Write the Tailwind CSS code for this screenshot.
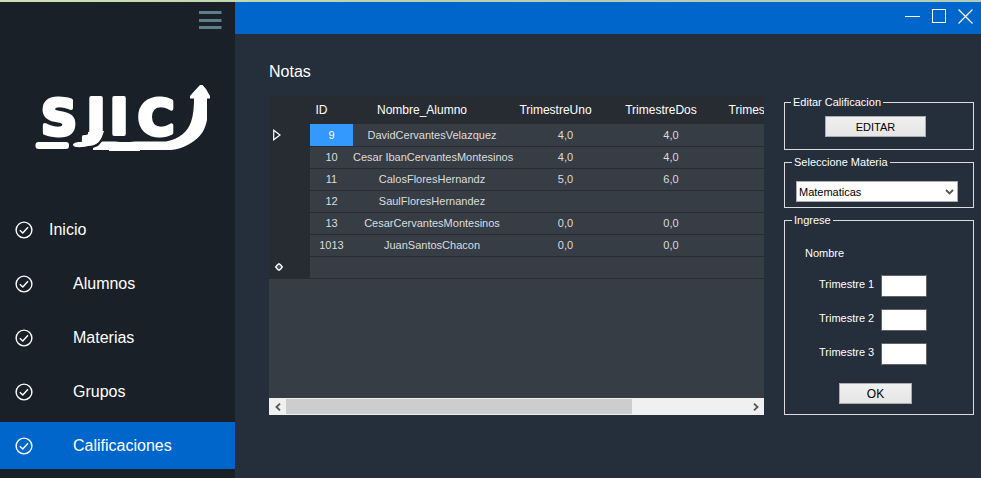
<!DOCTYPE html>
<html lang="es">
<head>
<meta charset="utf-8">
<title>Notas</title>
<script src="https://cdn.jsdelivr.net/npm/@tailwindcss/browser@4"></script>
</head>
<body class="flex min-h-screen flex-col bg-[#252e3b] font-['Liberation_Sans',sans-serif] text-white">
<svg class="hidden">
  <symbol id="check" viewBox="0 0 18 18"><circle cx="9" cy="9" r="7.9" fill="none" stroke="#fff" stroke-width="1.4"/><path d="M4.8 9.2 7.8 12 13 6.2" fill="none" stroke="#fff" stroke-width="1.4"/></symbol>
</svg>
<div class="h-0.5 bg-linear-to-r from-[#cfe0b4] via-[#b5cfb0] to-[#a9cfb8]"></div>
<div class="flex flex-1">
  <aside class="flex w-[235px] shrink-0 flex-col bg-[#1a2028]">
    <div class="flex justify-end pt-2 pr-[13px]">
      <button aria-label="Menú" class="block">
        <svg width="23" height="20" viewBox="0 0 23 20" fill="#607d8b"><path d="M0 1h22.5v3H0zM0 9h22.5v3H0zM0 16h22.5v3H0z"/></svg>
      </button>
    </div>
    <svg class="mt-[50px] ml-[30px]" width="186" height="76" viewBox="30 80 186 76" fill="#fff" stroke="#fff" stroke-linejoin="round" font-family="DejaVu Sans" font-weight="700" font-size="50" role="img" aria-label="SJIC">
      <g stroke-width="4" text-anchor="middle">
        <text x="59" y="135">S</text>
        <text x="96" y="134">J</text>
        <text x="119" y="134">I</text>
        <text x="156" y="135">C</text>
      </g>
      <g stroke="none">
        <rect x="35.500" y="142" width="33.500" height="7" rx="3"/>
        <path d="M102 141.500H115Q125 142.500 135 141.500H166C180 139 188 131 191 122C193.500 115 194 106 194 98.500H190V96L193.500 92L200 85H202.500L206 89L210 96V98.500H207V120C205 130 201 136 194 141C186 147 178 149.500 170 150H140V151H109V150H93V148L98 146Z"/>
        <path d="M88 132C89 138 86 141.500 80 142C76 142 73 143 73 145C74 148 82 148 92 145C98 144 102 138 104 131Z"/>
      </g>
    </svg>
    <nav class="mt-[50px] flex flex-col gap-[7px] text-base">
      <a href="#" class="flex h-[47px] items-center gap-4 pl-[15px]"><svg width="18" height="18"><use href="#check"/></svg>Inicio</a>
      <a href="#" class="flex h-[47px] items-center gap-10 pl-[15px]"><svg width="18" height="18"><use href="#check"/></svg>Alumnos</a>
      <a href="#" class="flex h-[47px] items-center gap-10 pl-[15px]"><svg width="18" height="18"><use href="#check"/></svg>Materias</a>
      <a href="#" class="flex h-[47px] items-center gap-10 pl-[15px]"><svg width="18" height="18"><use href="#check"/></svg>Grupos</a>
      <a href="#" class="flex h-[47px] items-center gap-10 bg-[#0066cc] pl-[15px]"><svg width="18" height="18"><use href="#check"/></svg>Calificaciones</a>
    </nav>
  </aside>
  <div class="flex min-w-0 flex-1 flex-col">
    <header class="flex h-8 items-center justify-end gap-3 bg-[#0066cc] pr-2 pb-1">
      <button aria-label="Minimizar"><svg width="15" height="15"><path d="M0 7.500H15" stroke="#fff"/></svg></button>
      <button aria-label="Maximizar"><svg width="14" height="14"><rect x=".5" y=".5" width="13" height="13" fill="none" stroke="#fff"/></svg></button>
      <button aria-label="Cerrar"><svg width="15" height="15"><path d="M.5.5l14 14M14.500.5l-14 14" stroke="#fff" stroke-width="1.200"/></svg></button>
    </header>
    <main class="flex-1 pt-[26px] pr-[7px] pl-[34px]">
      <h1 class="mb-3 text-base/6">Notas</h1>
      <div class="flex items-stretch gap-5">
        <section class="flex min-w-0 flex-1 flex-col bg-[#373d45]">
          <div class="flex-1 overflow-hidden">
            <table class="w-[560px] table-fixed border-collapse text-center text-[11px]/4 whitespace-nowrap text-[#dcdcdc]">
              <colgroup><col class="w-[41px]"><col class="w-[43px]"><col class="w-[158px]"><col class="w-[109px]"><col class="w-[102px]"><col class="w-[107px]"></colgroup>
              <thead>
                <tr class="h-7 bg-[#272c33] text-xs text-white">
                  <th class="p-0"></th><th class="py-0 pr-5 pl-0 font-normal">ID</th><th class="py-0 pr-5 pl-0 font-normal">Nombre_Alumno</th><th class="py-0 pr-5 pl-0 font-normal">TrimestreUno</th><th class="py-0 pr-5 pl-0 font-normal">TrimestreDos</th><th class="py-0 pr-5 pl-0 font-normal">TrimestreTres</th>
                </tr>
              </thead>
              <tbody>
                <tr class="h-[22px] border-b border-[#272c33]"><td class="bg-[#272c33] p-0 pl-1"><svg class="block" width="8" height="12"><path d="M.7 1.200v9.600L7 6z" fill="none" stroke="#fff" stroke-width="1.200"/></svg></td><td class="bg-[#3399ff] p-0 text-white">9</td><td class="p-0">DavidCervantesVelazquez</td><td class="p-0">4,0</td><td class="p-0">4,0</td><td></td></tr>
                <tr class="h-[22px] border-b border-[#272c33]"><td class="bg-[#272c33]"></td><td class="p-0">10</td><td class="p-0">Cesar IbanCervantesMontesinos</td><td class="p-0">4,0</td><td class="p-0">4,0</td><td></td></tr>
                <tr class="h-[22px] border-b border-[#272c33]"><td class="bg-[#272c33]"></td><td class="p-0">11</td><td class="p-0">CalosFloresHernandz</td><td class="p-0">5,0</td><td class="p-0">6,0</td><td></td></tr>
                <tr class="h-[22px] border-b border-[#272c33]"><td class="bg-[#272c33]"></td><td class="p-0">12</td><td class="p-0">SaulFloresHernandez</td><td></td><td></td><td></td></tr>
                <tr class="h-[22px] border-b border-[#272c33]"><td class="bg-[#272c33]"></td><td class="p-0">13</td><td class="p-0">CesarCervantesMontesinos</td><td class="p-0">0,0</td><td class="p-0">0,0</td><td></td></tr>
                <tr class="h-[22px] border-b border-[#272c33]"><td class="bg-[#272c33]"></td><td class="p-0">1013</td><td class="p-0">JuanSantosChacon</td><td class="p-0">0,0</td><td class="p-0">0,0</td><td></td></tr>
                <tr class="h-[22px] border-b border-[#272c33]"><td class="bg-[#272c33] p-0 pl-1.5"><svg class="block" width="8" height="8"><path d="M4 .7 5.500 1.800 7.300 4 5.500 6.200 4 7.300 2.500 6.200.7 4 2.500 1.800z" fill="#555" stroke="#fff" stroke-width="1.300"/></svg></td><td></td><td></td><td></td><td></td><td></td></tr>
              </tbody>
            </table>
          </div>
          <div class="flex h-[17px] items-center bg-[#f0f0f0]">
            <button aria-label="Desplazar a la izquierda" class="flex w-[17px] shrink-0 justify-center"><svg width="6" height="8"><path d="M5 .7 1.500 4 5 7.300" fill="none" stroke="#555" stroke-width="1.800"/></svg></button>
            <div class="h-full flex-1 py-px"><div class="h-full w-3/4 bg-[#cdcdcd]"></div></div>
            <button aria-label="Desplazar a la derecha" class="flex w-[17px] shrink-0 justify-center"><svg width="6" height="8"><path d="M1 .7 4.500 4 1 7.300" fill="none" stroke="#555" stroke-width="1.800"/></svg></button>
          </div>
        </section>
        <form class="flex w-[190px] shrink-0 flex-col gap-[6px] text-[11px]/3">
          <fieldset class="border border-[#dcdcdc] px-10 pt-2 pb-3">
            <legend class="-ml-[34px] px-0.5">Editar Calificacion</legend>
            <button type="button" class="block h-[21px] w-[101px] border border-[#acacac] bg-linear-to-b from-[#f0f0f0] to-[#e5e5e5] text-[11px]/4 text-black">EDITAR</button>
          </fieldset>
          <fieldset class="border border-[#dcdcdc] px-[11px] pt-[13px] pb-[5px]">
            <legend class="-ml-1 px-0.5">Seleccione Materia</legend>
            <div class="relative w-[162px]">
              <select aria-label="Materia" class="block h-[21px] w-full appearance-none border border-[#acacac] bg-white px-0.5 text-[11px] text-black"><option>Matematicas</option></select>
              <svg class="pointer-events-none absolute top-2 right-1" width="9" height="6"><path d="M1 1 4.500 4.500 8 1" fill="none" stroke="#555" stroke-width="1.800"/></svg>
            </div>
          </fieldset>
          <fieldset class="border border-[#dcdcdc] px-5 pt-[21px] pb-[10px]">
            <legend class="-ml-[13px] px-0.5">Ingrese</legend>
            <p>Nombre</p>
            <div class="mt-4 flex flex-col gap-3 pl-[14px]">
              <div class="flex items-start gap-[10px]"><label for="t1" class="w-[52px] pt-[3px] whitespace-nowrap">Trimestre 1</label><input id="t1" type="text" class="h-[22px] w-[46px] border border-[#646464] bg-white px-1 text-black"></div>
              <div class="flex items-start gap-[10px]"><label for="t2" class="w-[52px] pt-[3px] whitespace-nowrap">Trimestre 2</label><input id="t2" type="text" class="h-[22px] w-[46px] border border-[#646464] bg-white px-1 text-black"></div>
              <div class="flex items-start gap-[10px]"><label for="t3" class="w-[52px] pt-[3px] whitespace-nowrap">Trimestre 3</label><input id="t3" type="text" class="h-[22px] w-[46px] border border-[#646464] bg-white px-1 text-black"></div>
            </div>
            <button type="button" class="mt-[18px] ml-[34px] block h-[21px] w-[73px] border border-[#acacac] bg-linear-to-b from-[#f0f0f0] to-[#e5e5e5] text-xs/4 text-black">OK</button>
          </fieldset>
        </form>
      </div>
    </main>
  </div>
</div>
</body>
</html>
